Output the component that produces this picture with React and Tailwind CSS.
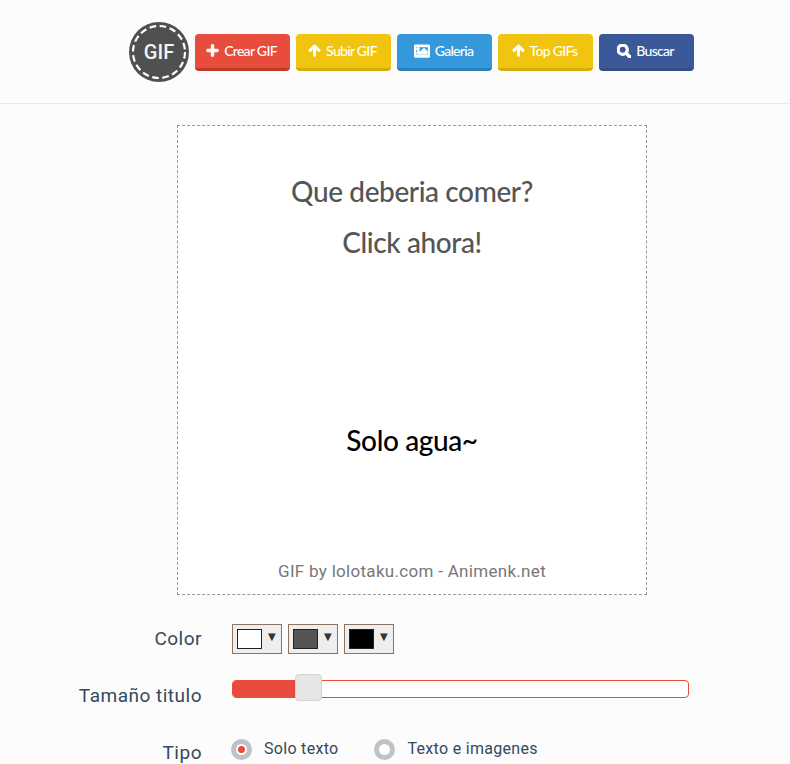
import React from "react";
import { FaPlus, FaArrowUp, FaRegImage, FaSearch } from "react-icons/fa";

const buttons = [
  { label: "Crear GIF", icon: FaPlus, size: "text-[13px]", color: "bg-[#e74c3c] border-[#c0392b]" },
  { label: "Subir GIF", icon: FaArrowUp, size: "text-[13px]", color: "bg-[#f1c40f] border-[#d4ac0d]" },
  { label: "Galeria", icon: FaRegImage, size: "text-[16px]", color: "bg-[#3498db] border-[#2980b9]" },
  { label: "Top GIFs", icon: FaArrowUp, size: "text-[13px]", color: "bg-[#f1c40f] border-[#d4ac0d]" },
  { label: "Buscar", icon: FaSearch, size: "text-[14px]", color: "bg-[#3b5998] border-[#344e86]" },
];

function Logo() {
  return (
    <div className="relative w-[60px] h-[60px] shrink-0">
      <svg viewBox="0 0 60 60" className="w-[60px] h-[60px]">
        <circle cx="30" cy="30" r="30" fill="#505050" />
        <circle cx="30" cy="30" r="26" fill="none" stroke="#fff" strokeWidth="2.2" strokeDasharray="6.6 3.6" />
      </svg>
      <span className="absolute inset-0 flex items-center justify-center text-[20px] font-medium text-[#f4f4f4] font-['Roboto',sans-serif]">
        GIF
      </span>
    </div>
  );
}

function Swatch({ color }) {
  return (
    <div className="w-[50px] h-[30px] border border-[#8f7360] bg-[#eeeeee] flex items-center pl-1 gap-[6px]">
      <div className={`w-[25px] h-5 border border-[#222222] ${color}`} />
      <span className="text-[10px] leading-none text-[#333333] mb-1 font-['DejaVu_Sans',sans-serif]">▼</span>
    </div>
  );
}

function Radio({ checked, label }) {
  return (
    <label className="flex items-center gap-3">
      <span className="w-[21px] h-[21px] rounded-full border-[5px] border-[#bdc3c7] bg-white flex items-center justify-center">
        {checked && <span className="w-[7px] h-[7px] rounded-full bg-[#e74c3c]" />}
      </span>
      <span className="text-[16px] tracking-[0.3px] text-[#34495e] font-['Roboto',sans-serif] leading-none mb-[1px]">{label}</span>
    </label>
  );
}

export default function App() {
  return (
    <div className="min-h-[764px] h-[764px] overflow-hidden bg-[#fcfcfc]">
      <header className="h-[104px] border-b border-[#e8e8e8] flex items-center pl-[129px]">
        <Logo />
        <nav className="flex gap-[6px] ml-[6px] mt-[2px]">
          {buttons.map((b) => (
            <a
              key={b.label}
              className={`w-[95px] h-[37px] pb-[1px] pr-[2px] rounded border-b-[3px] flex items-center justify-center gap-[5px] text-white text-[14px] font-medium tracking-[-0.7px] font-['Lato',sans-serif] ${b.color}`}
            >
              <b.icon className={`stroke-current stroke-[40] ${b.size}`} />
              {b.label}
            </a>
          ))}
        </nav>
      </header>

      <main className="mt-[21px] ml-[177px]">
        <div className="w-[470px] h-[470px] border border-dashed border-[#999999] bg-white flex flex-col items-center">
          <h1 className="mt-[45px] text-[28px] leading-[40px] tracking-[-0.4px] font-medium text-[#555555] font-['Lato',sans-serif]">Que deberia comer?</h1>
          <h2 className="mt-[11px] text-[28px] leading-[40px] tracking-[-0.4px] font-medium text-[#555555] font-['Lato',sans-serif]">Click ahora!</h2>
          <p className="mt-[158px] text-[28px] leading-[40px] tracking-[-0.4px] font-medium text-black font-['Lato',sans-serif]">Solo agua~</p>
          <p className="mt-[99px] text-[17px] leading-[24px] tracking-[0.3px] text-[#777777] font-['Roboto',sans-serif]">GIF by lolotaku.com - Animenk.net</p>
        </div>
      </main>

      <form className="mt-[29px] flex flex-col font-['Roboto',sans-serif]">
        <div className="flex items-center h-[30px]">
          <label className="w-[202px] text-right text-[19px] tracking-[0.5px] text-[#34495e]">Color</label>
          <div className="ml-[30px] flex gap-[6px]">
            <Swatch color="bg-white" />
            <Swatch color="bg-[#555555]" />
            <Swatch color="bg-black" />
          </div>
        </div>

        <div className="flex h-[30px] mt-[26px]">
          <label className="w-[202px] text-right text-[19px] leading-[30px] tracking-[0.5px] text-[#34495e] mt-[1px]">Tamaño titulo</label>
          <div className="relative ml-[30px] w-[457px] h-[18px] border border-[#e74c3c] rounded-[4px] bg-white">
            <div className="h-full w-[70px] bg-[#e74c3c] rounded-l-[3px]" />
            <div className="absolute left-[62px] top-[-7px] w-[27px] h-[27px] rounded-[4px] border border-[#d3d3d3] bg-[#e6e6e6]" />
          </div>
        </div>

        <div className="flex items-center h-[30px] mt-[27px]">
          <label className="w-[202px] text-right text-[19px] tracking-[0.5px] text-[#34495e] mt-[2px]">Tipo</label>
          <div className="ml-[29px] flex gap-[36px] mb-[5px]">
            <Radio checked label="Solo texto" />
            <Radio label="Texto e imagenes" />
          </div>
        </div>
      </form>
    </div>
  );
}
